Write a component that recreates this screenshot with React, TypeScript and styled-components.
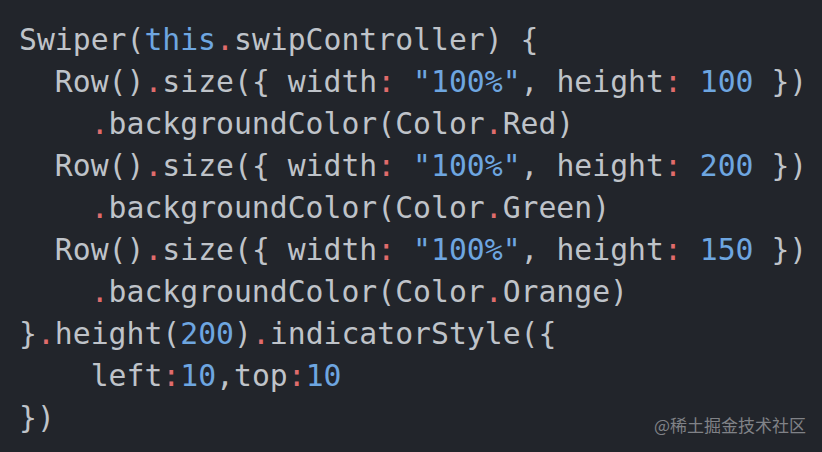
import React from "react";
import styled, { createGlobalStyle } from "styled-components";

const Global = createGlobalStyle`
  html, body { margin: 0; padding: 0; background: #22252b; }
`;

const Frame = styled.div`
  position: relative;
  width: 822px;
  height: 452px;
  background: #22252b;
  overflow: hidden;
  box-sizing: border-box;
  padding: 19px 0 0 19px;
`;

const Code = styled.pre`
  margin: 0;
  font-family: "DejaVu Sans Mono", "Liberation Mono", monospace;
  font-size: 29.75px;
  line-height: 42px;
  color: #bfc3c9;
  white-space: pre;
`;

const Line = styled.div`
  height: 42px;
`;

const Kw = styled.span`
  color: #6ea6e0;
`;

const Num = styled.span`
  color: #6ea6e0;
`;

const Str = styled.span`
  color: #6ea6e0;
`;

const Punct = styled.span`
  color: #e06c6c;
`;

const Watermark = styled.div`
  position: absolute;
  right: 16px;
  bottom: 17px;
  font-family: "Noto Sans CJK SC", "Noto Sans", sans-serif;
  font-size: 17px;
  line-height: 20px;
  color: #808287;
`;

export default function App() {
  return (
    <>
      <Global />
      <Frame>
        <Code>
          <Line>
            Swiper(<Kw>this</Kw>
            <Punct>.</Punct>swipController) {"{"}
          </Line>
          <Line>
            {"  "}Row()<Punct>.</Punct>size({"{"} width<Punct>:</Punct> <Str>"100%"</Str>, height<Punct>:</Punct> <Num>100</Num> {"})"}
          </Line>
          <Line>
            {"    "}
            <Punct>.</Punct>backgroundColor(Color<Punct>.</Punct>Red)
          </Line>
          <Line>
            {"  "}Row()<Punct>.</Punct>size({"{"} width<Punct>:</Punct> <Str>"100%"</Str>, height<Punct>:</Punct> <Num>200</Num> {"})"}
          </Line>
          <Line>
            {"    "}
            <Punct>.</Punct>backgroundColor(Color<Punct>.</Punct>Green)
          </Line>
          <Line>
            {"  "}Row()<Punct>.</Punct>size({"{"} width<Punct>:</Punct> <Str>"100%"</Str>, height<Punct>:</Punct> <Num>150</Num> {"})"}
          </Line>
          <Line>
            {"    "}
            <Punct>.</Punct>backgroundColor(Color<Punct>.</Punct>Orange)
          </Line>
          <Line>
            {"}"}
            <Punct>.</Punct>height(<Num>200</Num>)<Punct>.</Punct>indicatorStyle({"{"}
          </Line>
          <Line>
            {"    "}left<Punct>:</Punct>
            <Num>10</Num>,top<Punct>:</Punct>
            <Num>10</Num>
          </Line>
          <Line>{"})"}</Line>
        </Code>
        <Watermark>@稀土掘金技术社区</Watermark>
      </Frame>
    </>
  );
}
